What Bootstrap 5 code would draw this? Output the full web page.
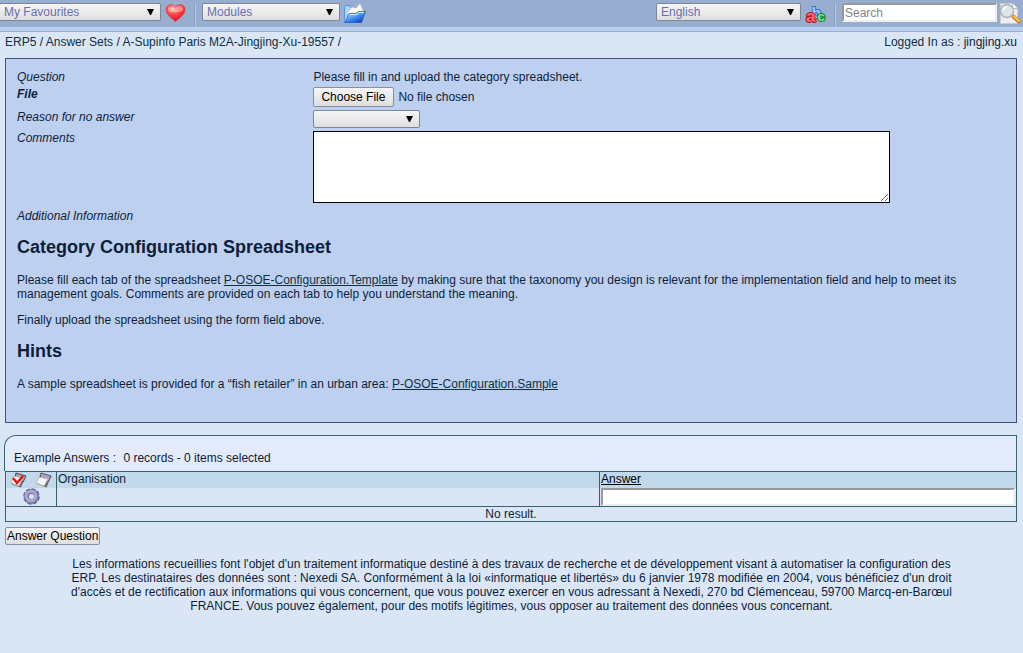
<!DOCTYPE html>
<html lang="en">
<head>
<meta charset="utf-8">
<meta name="viewport" content="width=device-width, initial-scale=1">
<title>ERP5 - Category Configuration Spreadsheet</title>
<link rel="stylesheet" href="https://cdn.jsdelivr.net/npm/bootstrap@5.3.0/dist/css/bootstrap.min.css">
<style>
body { background: #dae6f6; color: #0e1e38; font: 12px/14px "Liberation Sans", Arial, sans-serif; }
a { color: #0f3040; }
.crumbs a, .login a { text-decoration: none; }
.pathbar { padding: 3px 6px 0 5px; }
.topbar { height: 32px; background: #97aed1; border-bottom: 1px solid #97b0d8; box-shadow: inset 0 -4px #bdd0f0; padding: 3px 1px 0 0; }
.topbar .split { width: 2px; height: 24px; background: #b4c8dc; border-left: 1px solid #8aa3c4; margin: 0 6px 0 8px; }
.picker { appearance: none; height: 18px; padding: 0 4px; border: 1px solid #7b8798; border-radius: 2px; color: #666fb0; line-height: 14px;
  background: url("data:image/svg+xml,%3Csvg xmlns='http://www.w3.org/2000/svg' width='7' height='6'%3E%3Cpath d='M0 0h7L4 6h-1z'/%3E%3C/svg%3E") no-repeat right 6px center, linear-gradient(#f6f6f6, #dedede); }
.fav { width: 162px; margin-left: -1px; }
.modules { width: 138px; }
.lang { width: 145px; }
.reason { width: 107px; }
.iconbtn { display: block; border: 0; background: none; padding: 0; line-height: 0; }
.sunk { border: 2px solid; border-color: #999 #eee #eee #999; background: #fff; }
.search { width: 155px; height: 19px; padding: 0 1px; }
.search::placeholder { color: #858585; opacity: 1; }
.panel { margin: 9px 6px 12px 5px; padding: 11px 11px 31px; border: 1px solid #3d5080; background: #bdd0f0; }
.fields { display: grid; grid-template-columns: 30% 1fr; row-gap: 3px; margin-bottom: 6px; }
.fields label, .fields .name { font-style: italic; }
.upload { height: 20px; display: block; line-height: 20px; }
.upload::file-selector-button { height: 20px; margin: 0 4px 0 0; padding: 0 8px 0 7px; border: 1px solid #8890a0; border-radius: 2px; background: linear-gradient(#f6f6f6, #dedede) !important; color: #000; line-height: 18px; }
.comments { width: 577px; max-width: 100%; height: 72px; border: 1px solid #000; display: block; }
.panel h2 { font-size: 18px; line-height: 20px; font-weight: 700; margin: 14px 0 16px; }
.panel p { margin: 0 0 12px; }
.listhead { margin: 0 6px 0 4px; height: 36px; padding: 15px 9px 0; background: #e3eafa; border: 1px solid #35666f; border-bottom: 0; border-radius: 12px 0 0 0; }
.listing { margin: 0 6px 0 5px; border: 1px solid #35606f; }
.listing table { width: 100%; table-layout: fixed; border-collapse: separate; border-spacing: 0; }
.listing th, .listing td { padding: 0 1px; font-weight: 400; vertical-align: top; }
.listing th { background: #c1d9ea; height: 16px; }
.listing .filters td { height: 19px; border-bottom: 1px solid #35606f; }
.listing .ruled { border-left: 1px solid #35606f; }
.listing th a { color: #000; }
.checks { padding: 0 3px; }
.tools { width: 50px; }
.answers { width: 417px; }
.answerbox { display: block; width: 100%; height: 18px; }
.listing .empty td { height: 14px; text-align: center; }
.submit { margin: 5px 0 0 5px; height: 18px; padding: 0 1px 1px 1px; border: 1px solid #8890a0; border-radius: 2px; background: linear-gradient(#f6f6f6, #dedede); color: #000; }
.legal { margin: 12px 60px 0; text-align: center; }
</style>
</head>
<body>
<header class="topbar d-flex align-items-start">
  <select class="picker fav" aria-label="My Favourites"><option>My Favourites</option></select>
  <button class="iconbtn ms-1" aria-label="Go to favourite">
    <svg width="21" height="20" viewBox="0 0 22 19"><defs><radialGradient id="hg" cx=".4" cy=".25" r=".8"><stop offset="0" stop-color="#ffb0a8"/><stop offset=".4" stop-color="#ff4a48"/><stop offset="1" stop-color="#e00010"/></radialGradient></defs><path d="M11 18.500C8 15.500 1 11.500 1 6 1-.5 9-.5 11 3c2-3.500 10-3.500 10 3 0 5.500-7 9.500-10 12.500z" fill="url(#hg)" stroke="#d8505a" stroke-width=".8"/><path d="M3 6c0-4 5-4.500 7-1 2 1 2-3 6-3 3 0 3.500 3 3 5C14 10 8 9 3 8z" fill="#fff" opacity=".35"/></svg>
  </button>
  <span class="split"></span>
  <select class="picker modules" aria-label="Modules"><option>Modules</option></select>
  <button class="iconbtn ms-1" aria-label="Open module">
    <svg width="22" height="20" viewBox="0 0 22 20"><defs><linearGradient id="fg" x1="0" y1="0" x2=".8" y2="1"><stop offset="0" stop-color="#e0f4ff"/><stop offset=".5" stop-color="#4da0f5"/><stop offset="1" stop-color="#0a35c0"/></linearGradient></defs><path d="M.5 4.500l1-2h4l1 2h9v14.500H.5z" fill="#a5d5fc" stroke="#4a85d8" stroke-width=".8"/><path d="M3 10l5-6 4 1 4-4.500 4 9-3 5H4z" fill="#f7f7ff" stroke="#b5bde0" stroke-width=".7"/><path d="M5 10.500h7l2.500-2h7L17.500 19.500H1z" fill="url(#fg)" stroke="#2455cc" stroke-width=".8"/><path d="M5.500 11.500h7l2.500-2h5" stroke="#d7f2ff" fill="none"/></svg>
  </button>
  <select class="picker lang ms-auto" aria-label="Language"><option>English</option></select>
  <button class="iconbtn ms-1" aria-label="Change language">
    <svg width="21" height="25" viewBox="0 0 22 25" font-family="Liberation Sans, sans-serif" font-weight="700" paint-order="stroke" stroke-width="2"><text x="7" y="15" font-size="16" fill="#9ccfff" stroke="#2b72d8">b</text><text x="1" y="19" font-size="18" fill="#ff6a70" stroke="#c00a20">a</text><text x="13" y="18" font-size="14" fill="#80f090" stroke="#118030">c</text></svg>
  </button>
  <span class="split"></span>
  <input class="sunk search" type="text" placeholder="Search" aria-label="Search">
  <button class="iconbtn" aria-label="Run search">
    <svg width="25" height="22" viewBox="0 0 25 22"><path d="M3.500.5h12l5 5v15h-17z" fill="#eee" stroke="#c9ccd2"/><path d="M15.500.5v5h5" fill="#fff" stroke="#bbb"/><path d="M16.500 13.500l5.500 5" stroke="#b5782a" stroke-width="4" stroke-linecap="round"/><path d="M17 13.500l5 4.500" stroke="#f7bd50" stroke-width="2.500" stroke-linecap="round"/><circle cx="10" cy="8" r="6.500" fill="#dce5ea" stroke="#b0b4b8" stroke-width="1.500"/><path d="M6 8c0-3 2-4 4-4" stroke="#fff" stroke-width="1.500" fill="none"/></svg>
  </button>
</header>

<div class="pathbar d-flex justify-content-between">
  <nav class="crumbs" aria-label="Breadcrumb"><a href="#">ERP5</a> / <a href="#">Answer Sets</a> / <a href="#">A-Supinfo Paris M2A-Jingjing-Xu-19557</a> /</nav>
  <div class="login"><a href="#">Logged In as :</a> jingjing.xu</div>
</div>

<main>
  <section class="panel">
    <div class="fields">
      <span class="name">Question</span><span>Please fill in and upload the category spreadsheet.</span>
      <label for="file" class="fw-bold">File</label><input class="upload" type="file" id="file">
      <label for="reason">Reason for no answer</label><select class="picker reason" id="reason"><option></option></select>
      <label for="comments">Comments</label><textarea class="comments" id="comments"></textarea>
    </div>
    <div class="fst-italic">Additional Information</div>
    <h2>Category Configuration Spreadsheet</h2>
    <p>Please fill each tab of the spreadsheet <a href="#">P-OSOE-Configuration.Template</a> by making sure that the taxonomy you design is relevant for the implementation field and help to meet its management goals. Comments are provided on each tab to help you understand the meaning.</p>
    <p>Finally upload the spreadsheet using the form field above.</p>
    <h2>Hints</h2>
    <p class="mb-0">A sample spreadsheet is provided for a “fish retailer” in an urban area: <a href="#">P-OSOE-Configuration.Sample</a></p>
  </section>

  <div class="listhead"><span class="me-1">Example Answers :</span> <span>0 records - 0 items selected</span></div>
  <div class="listing">
    <table>
      <colgroup><col class="tools"><col><col class="answers"></colgroup>
      <tr>
        <th scope="col"><div class="checks d-flex justify-content-between">
          <button class="iconbtn" aria-label="Check all"><svg width="17" height="16" viewBox="0 0 17 16"><path d="M6 1l10 3-5 11.500-10-3.500z" fill="#776d72"/><path d="M6 1l10 3-3 6-8-3z" fill="#a9a3b8" stroke="#554b50"/><path d="M4 4l9 2-4 8-8-3z" fill="#fff" stroke="#a5a0a5" stroke-width=".7"/><path d="M3 6l4 5 6-7" fill="none" stroke="#f01414" stroke-width="2.500"/></svg></button>
          <button class="iconbtn" aria-label="Uncheck all"><svg width="17" height="16" viewBox="0 0 17 16"><path d="M6 1l10.500 3-5 11.500-10.500-4z" fill="#776d72"/><path d="M6 1l10 3-3 6-8-3z" fill="#aaa5c8" stroke="#665c60"/><path d="M4 5l9 2-4 7-8-3z" fill="#f7f7f5" stroke="#b0aab0" stroke-width=".7"/></svg></button>
        </div></th>
        <th scope="col" class="ruled">Organisation</th>
        <th scope="col" class="ruled"><a href="#">Answer</a></th>
      </tr>
      <tr class="filters">
        <td><button class="iconbtn mx-auto" aria-label="Filter"><svg width="17" height="17" viewBox="0 0 17 17"><circle cx="8.500" cy="8.500" r="6.800" fill="none" stroke="#63638f" stroke-width="3" stroke-dasharray="3.800 1.500"/><circle cx="8.500" cy="8.500" r="5" fill="none" stroke="#7777a5" stroke-width="5"/><circle cx="8" cy="8" r="4.800" fill="none" stroke="#a8a8d0" stroke-width="3"/></svg></button></td>
        <td class="ruled"></td>
        <td class="ruled"><input class="sunk answerbox" type="text" aria-label="Filter by answer"></td>
      </tr>
      <tr class="empty"><td colspan="3">No result.</td></tr>
    </table>
  </div>
  <button class="submit">Answer Question</button>
</main>
<footer class="legal">Les informations recueillies font l'objet d'un traitement informatique destiné à des travaux de recherche et de développement visant à automatiser la configuration des ERP. Les destinataires des données sont : Nexedi SA. Conformément à la loi «informatique et libertés» du 6 janvier 1978 modifiée en 2004, vous bénéficiez d'un droit d'accès et de rectification aux informations qui vous concernent, que vous pouvez exercer en vous adressant à Nexedi, 270 bd Clémenceau, 59700 Marcq-en-Barœul FRANCE. Vous pouvez également, pour des motifs légitimes, vous opposer au traitement des données vous concernant.</footer>
<script src="https://cdn.jsdelivr.net/npm/bootstrap@5.3.0/dist/js/bootstrap.bundle.min.js"></script>
</body>
</html>
